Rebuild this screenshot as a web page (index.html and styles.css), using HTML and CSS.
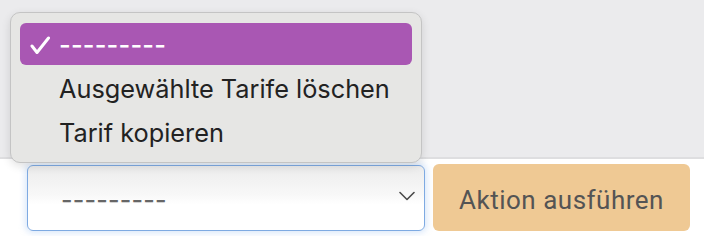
FILE: index.html
```html
<!DOCTYPE html>
<html lang="de">
<head>
<meta charset="utf-8">
<title>Aktion</title>
<link rel="stylesheet" href="styles.css">
</head>
<body>
<div class="page">
  <div class="top-band"></div>
  <div class="action-row">
    <div class="select">
      <span class="select-value dashes">---------</span>
      <svg class="chevron" width="16" height="10" viewBox="0 0 16 10"><path d="M1 1.5 L8 8.5 L15 1.5" fill="none" stroke="#4a4a4a" stroke-width="1.6" stroke-linecap="round" stroke-linejoin="round"/></svg>
    </div>
    <button class="run-btn">Aktion ausführen</button>
  </div>
  <div class="menu">
    <div class="menu-item selected">
      <svg class="check" width="22" height="20" viewBox="0 0 22 20"><path d="M2 10 L7 16.5 L18.5 2" fill="none" stroke="#fff" stroke-width="3" stroke-linecap="round" stroke-linejoin="round"/></svg>
      <span class="dashes">---------</span>
    </div>
    <div class="menu-item">Ausgewählte Tarife löschen</div>
    <div class="menu-item">Tarif kopieren</div>
  </div>
</div>
</body>
</html>
```
FILE: styles.css
```css
html, body {
  margin: 0;
  padding: 0;
}
body {
  width: 704px;
  height: 236px;
  overflow: hidden;
  background: #ffffff;
  font-family: "Inter", "Liberation Sans", sans-serif;
}
.page {
  position: relative;
  width: 704px;
  height: 236px;
}
.top-band {
  height: 157px;
  background: #ebebed;
  border-bottom: 2px solid #dedee0;
}
.action-row {
  display: flex;
  align-items: flex-start;
  gap: 8px;
  padding-left: 27px;
  margin-top: 5px;
}
.select {
  box-sizing: border-box;
  width: 398px;
  height: 66px;
  margin-top: 1px;
  border: 1.5px solid #7eaae2;
  border-radius: 6px;
  background: linear-gradient(to bottom, #ececec 0%, #f8f8f8 45%, #ffffff 60%);
  box-shadow: 0 0 6px 2px rgba(150, 190, 240, 0.35);
  display: flex;
  align-items: center;
  padding: 0 9px 0 33px;
}
.select-value {
  flex: 1;
  color: #666;
  font-family: "Inter", "Liberation Sans", sans-serif;
  font-size: 25px;
  padding-top: 4px;
}
.chevron {
  display: block;
  margin-top: -4px;
}
.run-btn {
  box-sizing: border-box;
  width: 257px;
  height: 67px;
  border: none;
  border-radius: 6px;
  background: #efc994;
  color: #545454;
  font-family: "Roboto", "Liberation Sans", sans-serif;
  font-size: 26px;
  letter-spacing: 0.5px;
  padding: 0;
  padding-top: 5px;
}
.menu {
  position: absolute;
  left: 10px;
  top: 12px;
  box-sizing: border-box;
  width: 412px;
  height: 151px;
  padding: 10px 9px;
  background: #e6e6e4;
  border: 1px solid #c4c4c4;
  border-radius: 10px;
  box-shadow: 0 3px 10px rgba(0, 0, 0, 0.12);
  display: flex;
  flex-direction: column;
}
.menu-item {
  box-sizing: border-box;
  height: 44px;
  display: flex;
  align-items: center;
  padding-left: 39px;
  padding-top: 4px;
  font-size: 25.3px;
  color: #222222;
  position: relative;
  border-radius: 6px;
}
.menu-item.selected {
  height: 43px;
  padding-top: 0;
  background: #a957b3;
  color: #ffffff;
}
.check {
  position: absolute;
  left: 10px;
  top: 13px;
}
.dashes {
  letter-spacing: 0.2px;
  font-weight: 500;
}
```
